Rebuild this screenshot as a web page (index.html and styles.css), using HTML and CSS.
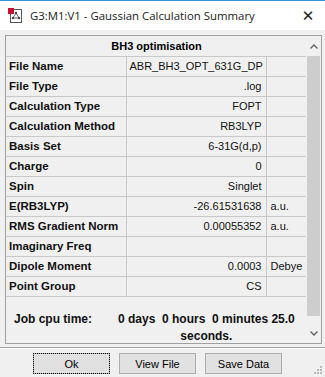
FILE: index.html
```html
<!DOCTYPE html>
<html lang="en">
<head>
    <meta charset="UTF-8">
    <title>G3:M1:V1 - Gaussian Calculation Summary</title>
    <link rel="stylesheet" href="styles.css">
</head>
<body>
    <div class="window">
        <div class="titlebar">
            <svg class="app-icon" width="16" height="16" viewBox="0 0 16 16">
                <rect x="3.5" y="1.5" width="11" height="13" fill="#fff" stroke="#555"/>
                <rect x="1" y="0" width="6" height="6" fill="#c8102e"/>
                <path d="M9 5 L6 10 M9 5 L12 10 M6 10 L12 10" stroke="#666" stroke-width="1" fill="none"/>
                <circle cx="9" cy="5" r="1.2" fill="#444"/>
                <circle cx="6" cy="10" r="1.2" fill="#444"/>
                <circle cx="12" cy="10" r="1.2" fill="#444"/>
            </svg>
            <span class="title">G3:M1:V1 - Gaussian Calculation Summary</span>
            <span class="close">&#x2715;</span>
        </div>

        <div class="content">
            <div class="panel">
                <div class="grid-wrap">
                    <table class="summary">
                        <colgroup>
                            <col class="col-label">
                            <col class="col-value">
                            <col class="col-unit">
                        </colgroup>
                        <tr><th colspan="3">BH3 optimisation</th></tr>
                        <tr><td class="label">File Name</td><td class="value">ABR_BH3_OPT_631G_DP</td><td class="unit"></td></tr>
                        <tr><td class="label">File Type</td><td class="value">.log</td><td class="unit"></td></tr>
                        <tr><td class="label">Calculation Type</td><td class="value">FOPT</td><td class="unit"></td></tr>
                        <tr><td class="label">Calculation Method</td><td class="value">RB3LYP</td><td class="unit"></td></tr>
                        <tr><td class="label">Basis Set</td><td class="value">6-31G(d,p)</td><td class="unit"></td></tr>
                        <tr><td class="label">Charge</td><td class="value">0</td><td class="unit"></td></tr>
                        <tr><td class="label">Spin</td><td class="value">Singlet</td><td class="unit"></td></tr>
                        <tr><td class="label">E(RB3LYP)</td><td class="value">-26.61531638</td><td class="unit">a.u.</td></tr>
                        <tr><td class="label">RMS Gradient Norm</td><td class="value">0.00055352</td><td class="unit">a.u.</td></tr>
                        <tr><td class="label">Imaginary Freq</td><td class="value"></td><td class="unit"></td></tr>
                        <tr><td class="label">Dipole Moment</td><td class="value">0.0003</td><td class="unit">Debye</td></tr>
                        <tr><td class="label">Point Group</td><td class="value">CS</td><td class="unit"></td></tr>
                    </table>
                    <div class="cpu">
                        <span class="cpu-label">Job cpu time:</span>
                        <span class="cpu-value">0 days&nbsp; 0 hours&nbsp; 0 minutes 25.0<br>seconds.</span>
                    </div>
                </div>
                <div class="scrollbar">
                    <div class="arrow">
                        <svg width="8" height="5" viewBox="0 0 8 5"><path d="M0.5 4.5 L4 1 L7.5 4.5" stroke="#606060" stroke-width="1.3" fill="none"/></svg>
                    </div>
                    <div class="track"><div class="thumb"></div></div>
                    <div class="arrow">
                        <svg width="8" height="5" viewBox="0 0 8 5"><path d="M0.5 0.5 L4 4 L7.5 0.5" stroke="#606060" stroke-width="1.3" fill="none"/></svg>
                    </div>
                </div>
            </div>

            <div class="buttons">
                <button class="btn btn-default">Ok</button>
                <button class="btn">View File</button>
                <button class="btn">Save Data</button>
            </div>
            <svg class="grip" width="10" height="10" viewBox="0 0 10 10">
                <rect x="7" y="1" width="2" height="2" fill="#b8b8b8"/>
                <rect x="4" y="4" width="2" height="2" fill="#b8b8b8"/>
                <rect x="7" y="4" width="2" height="2" fill="#b8b8b8"/>
                <rect x="1" y="7" width="2" height="2" fill="#b8b8b8"/>
                <rect x="4" y="7" width="2" height="2" fill="#b8b8b8"/>
                <rect x="7" y="7" width="2" height="2" fill="#b8b8b8"/>
            </svg>
        </div>
    </div>
</body>
</html>
```

FILE: styles.css
```css
body {
    margin: 0;
    font-family: 'Liberation Sans', Arial, sans-serif;
    background: #f0f0f0;
}

.window {
    width: 325px;
    height: 377px;
    background: #f0f0f0;
    position: relative;
    overflow: hidden;
}

.titlebar {
    height: 30px;
    background: #fff;
    border-top: 1px solid #3c8fd0;
    box-sizing: border-box;
    display: flex;
    align-items: center;
    padding-left: 7px;
}

.app-icon {
    margin-right: 7px;
    flex: none;
}

.title {
    font-family: 'Open Sans', 'Noto Sans', sans-serif;
    font-size: 11.4px;
    color: #1a1a1a;
    flex: 1;
}

.close {
    font-family: 'DejaVu Sans', sans-serif;
    font-size: 15px;
    color: #222;
    width: 34px;
    text-align: center;
}

.content {
    padding: 5px 3px 0 5px;
}

.panel {
    display: flex;
    border: 1px solid #a0a0a0;
    height: 309px;
    box-sizing: border-box;
}

.grid-wrap {
    flex: 1;
    overflow: hidden;
}

.summary {
    border-collapse: collapse;
    width: 301px;
    table-layout: fixed;
    font-size: 11px;
}

.col-label {
    width: 120px;
}

.col-value {
    width: 140px;
}

.col-unit {
    width: 41px;
}

.summary th {
    height: 20px;
    line-height: 20px;
    font-weight: bold;
    text-align: center;
    color: #000;
    border-bottom: 1px solid #c8c8c8;
    padding: 0;
}

.summary td {
    height: 19px;
    line-height: 19px;
    padding: 0 4px 0 3px;
    border-bottom: 1px solid #c8c8c8;
    color: #111;
    white-space: nowrap;
    overflow: hidden;
}

.summary .label {
    font-size: 11.5px;
    font-weight: bold;
    border-right: 1px solid #c8c8c8;
}

.summary .value {
    text-align: right;
    border-right: 1px solid #c8c8c8;
    padding-right: 4px;
}

.summary .unit {
    padding-left: 4px;
}

.cpu {
    display: flex;
    font-size: 12px;
    font-weight: bold;
    color: #111;
    padding: 14px 0 0 8px;
    line-height: 17px;
}

.cpu-label {
    width: 104px;
}

.cpu-value {
    text-align: center;
}

.scrollbar {
    width: 15px;
    display: flex;
    flex-direction: column;
    background: #f0f0f0;
}

.arrow {
    height: 20px;
    display: flex;
    align-items: center;
    justify-content: center;
}

.track {
    flex: 1;
    padding: 0 1px;
}

.thumb {
    background: #cdcdcd;
    height: 260px;
}

.buttons {
    display: flex;
    gap: 9px;
    border-top: 1px solid #a0a0a0;
    box-shadow: inset 0 1px 0 #fff;
    margin: 3px -3px 0 -5px;
    padding: 5px 0 0 33px;
}

.btn {
    width: 77px;
    height: 21px;
    font-family: 'Liberation Sans', Arial, sans-serif;
    font-size: 11px;
    color: #000;
    background: #e1e1e1;
    border: 1px solid #adadad;
    padding: 0;
}

.btn-default {
    outline: 1px dotted #000;
    outline-offset: -1px;
}

.grip {
    position: absolute;
    right: 2px;
    bottom: 2px;
}
```
